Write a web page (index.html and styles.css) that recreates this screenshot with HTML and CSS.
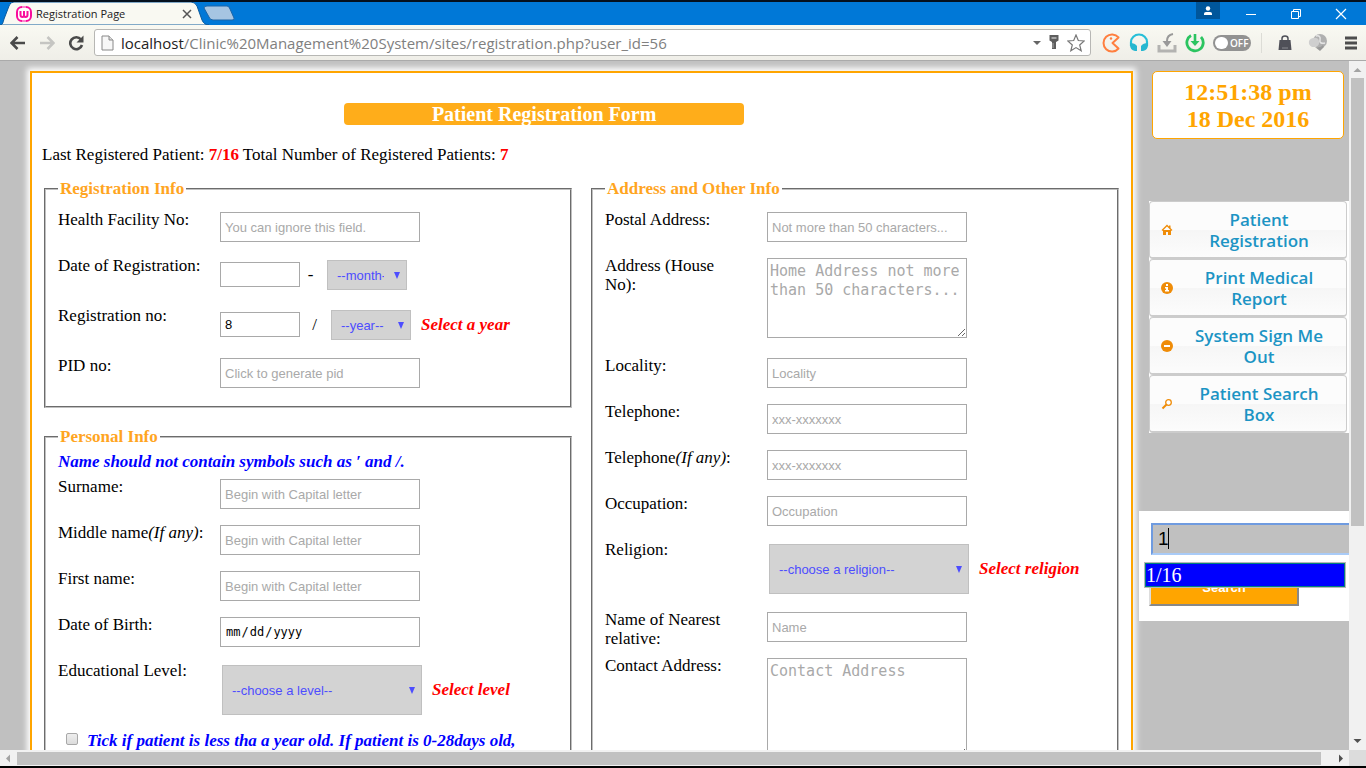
FILE: index.html
```html
<!DOCTYPE html>
<html lang="en">
<head>
<meta charset="utf-8">
<title>Registration Page</title>
<link rel="stylesheet" href="styles.css">
</head>
<body>
<div class="browser">
  <header class="tabbar">
    <svg class="tabshape" width="240" height="23" viewBox="0 0 240 23">
      <path d="M0 23 C3 23 3 20 4 17 L9 4 Q10 0 14 0 H191 Q195 0 197 4 L202 18 Q204 23 209 23 Z" fill="#f9f9f2" stroke="#0a5a9e" stroke-width="1"/>
      <path d="M207 4 H227 Q229 4 230 7 L234 16 Q235 18 232 18 H213 Q210 18 209 15 L204 6 Q204 4 207 4Z" fill="#a6c5e2" stroke="#1b65a8"/>
    </svg>
    <div class="tab">
      <svg width="16" height="16" viewBox="0 0 16 16"><rect x="1" y="1" width="14" height="14" rx="5" fill="#fff" stroke="#f90d9c" stroke-width="2"/><path d="M4.500 5 V9 Q4.500 11 6.500 11 Q8 11 8 9 V5 M8 9 Q8 11 9.500 11 Q11.500 11 11.500 9 V5" fill="none" stroke="#f90d9c" stroke-width="2"/><path d="M6 1 H10 M6 15 H10" stroke="#fff" stroke-width="1"/></svg>
      <span class="tabtitle">Registration Page</span>
      <button class="plain" aria-label="Close tab"><svg width="10" height="10" viewBox="0 0 10 10"><path d="M1 1 L9 9 M9 1 L1 9" stroke="#555" stroke-width="1.500"/></svg></button>
    </div>
    <div class="winbtns">
      <button class="user" aria-label="Profile"><svg width="10" height="10" viewBox="0 0 10 10"><circle cx="5" cy="2.500" r="2.200" fill="#fff"/><path d="M1 9 V7.500 Q1 6 3 6 H7 Q9 6 9 7.500 V9Z" fill="#fff"/></svg></button>
      <button class="plain" aria-label="Minimise"><svg width="12" height="12" viewBox="0 0 12 12"><path d="M1 6.500 H11" stroke="#fff"/></svg></button>
      <button class="plain" aria-label="Restore"><svg width="12" height="12" viewBox="0 0 12 12"><path d="M1.500 3.500 H8.500 V10.500 H1.500Z M3.500 3 V1.500 H10.500 V8.500 H9" fill="none" stroke="#fff"/></svg></button>
      <button class="plain" aria-label="Close"><svg width="12" height="12" viewBox="0 0 12 12"><path d="M1 1 L11 11 M11 1 L1 11" stroke="#fff" stroke-width="1.200"/></svg></button>
    </div>
  </header>
  <nav class="toolbar">
    <div class="navbtns">
      <button class="plain" aria-label="Back"><svg width="16" height="14" viewBox="0 0 16 14"><path d="M15 7 H2 M7.500 1 L1.500 7 L7.500 13" fill="none" stroke="#4a4a4a" stroke-width="2.600"/></svg></button>
      <button class="plain" aria-label="Forward"><svg width="16" height="14" viewBox="0 0 16 14"><path d="M1 7 H14 M8.500 1 L14.500 7 L8.500 13" fill="none" stroke="#c5c5c2" stroke-width="2.600"/></svg></button>
      <button class="plain" aria-label="Reload"><svg width="16" height="16" viewBox="0 0 16 16"><path d="M13 4.500 A6 6 0 1 0 14 10" fill="none" stroke="#4a4a4a" stroke-width="2.600"/><path d="M15.500 0.500 V7.500 H8.500Z" fill="#4a4a4a"/></svg></button>
    </div>
    <div class="omnibox">
      <svg width="13" height="16" viewBox="0 0 13 16"><path d="M1 1 H8 L12 5 V15 H1Z" fill="#f7f7f7" stroke="#888"/><path d="M8 1 V5 H12" fill="#ddd" stroke="#888"/></svg>
      <div class="url"><span>localhost</span>/Clinic%20Management%20System/sites/registration.php?user_id=56</div>
      <svg width="8" height="4" viewBox="0 0 8 4"><path d="M0 0 H8 L4 4Z" fill="#666"/></svg>
      <svg width="12" height="15" viewBox="0 0 12 15"><path d="M1.500 0 H10.500 V5.500 L8 7 V14 H4 V7 L1.500 5.500Z" fill="#5e5e5e"/><path d="M3.500 3 H8.500" stroke="#eee"/><path d="M5 8 V13" stroke="#aaa"/></svg>
      <svg width="18" height="18" viewBox="0 0 18 18"><path d="M9 1 L11.300 6.500 L17.200 7 L12.700 11 L14.200 16.800 L9 13.600 L3.800 16.800 L5.300 11 L0.800 7 L6.700 6.500Z" fill="#fff" stroke="#777" stroke-width="1.200"/></svg>
    </div>
    <div class="exts">
      <svg width="20" height="20" viewBox="0 0 20 20"><path d="M17.500 4.500 A8.500 8.500 0 1 0 17.500 15.500 L11.500 10Z" fill="none" stroke="#ff7f3f" stroke-width="2" stroke-linejoin="round"/><circle cx="10" cy="5.500" r="1.200" fill="#ff7f3f"/></svg>
      <svg width="20" height="20" viewBox="0 0 20 20"><path d="M2 13 V9 A8 7.500 0 0 1 18 9 V13" fill="none" stroke="#27bfd8" stroke-width="2.200"/><path d="M1 10 Q6 10 8 13 V18 H6 Q1 17 1 12Z M19 10 Q14 10 12 13 V18 H14 Q19 17 19 12Z" fill="#27b7d0"/></svg>
      <svg width="20" height="20" viewBox="0 0 20 20"><path d="M2 12 V18 H18 V12" fill="none" stroke="#b3b3b1" stroke-width="3"/><path d="M16 1 Q10 2 10 8" fill="none" stroke="#999" stroke-width="2"/><path d="M5.500 8 H14.500 L10 14Z" fill="#999"/></svg>
      <svg width="20" height="20" viewBox="0 0 20 20"><path d="M6 2.500 A8.200 8.200 0 1 0 16 4" fill="none" stroke="#2bc460" stroke-width="2.800"/><path d="M10 1 V9" stroke="#2bc460" stroke-width="2.600"/><path d="M5.500 8 H14.500 L10 13Z" fill="#2bc460"/></svg>
      <span class="off"><i></i>OFF</span>
      <span class="rule"></span>
      <svg class="bag" width="14" height="16" viewBox="0 0 14 16"><path d="M1.500 5 H12.500 L13.500 15 H0.500Z" fill="#4f5058"/><path d="M4 6 V3.500 Q4 1 7 1 Q10 1 10 3.500 V6" fill="none" stroke="#4f5058" stroke-width="1.500"/><path d="M4 13 H10" stroke="#8a8a90"/></svg>
      <svg width="20" height="18" viewBox="0 0 20 18"><circle cx="12" cy="7" r="7" fill="#b0b0b0"/><path d="M1 10 Q0 5 5 4 Q10 3 11 7 Q12 12 7 13 L4 13 Q2 12 1 10Z" fill="#cfcfcf"/><path d="M7 13 Q13 14 15 11 L16 13 L12 17Z" fill="#999"/><path d="M8 2 Q13 1 12 6 Q11 10 17 9" fill="none" stroke="#e4e4e4" stroke-width="1.500"/></svg>
      <button class="plain" aria-label="Menu"><svg width="14" height="14" viewBox="0 0 14 14"><path d="M1 2 H13 M1 7 H13 M1 12 H13" stroke="#4d4d4d" stroke-width="3"/></svg></button>
    </div>
  </nav>
  <div class="view">
    <div class="page">
      <main class="card">
        <h1 class="title">Patient Registration Form</h1>
        <p class="stats">Last Registered Patient: <b>7/16</b> Total Number of Registered Patients: <b>7</b></p>
        <form class="columns">
          <div class="column">
            <fieldset class="group">
              <legend>Registration Info</legend>
              <div class="row"><label for="hf">Health Facility No:</label><input class="field" id="hf" type="text" placeholder="You can ignore this field."></div>
              <div class="row pair"><label for="day">Date of Registration:</label><input class="field short" id="day" type="text"><span class="dash">-</span><select class="pick small" aria-label="Month"><option>--month--</option></select></div>
              <div class="row pair"><label for="reg">Registration no:</label><input class="field short" id="reg" type="text" value="8"><span class="slash">/</span><select class="pick small" aria-label="Year"><option>--year--</option></select><span class="error">Select a year</span></div>
              <div class="row"><label for="pid">PID no:</label><input class="field" id="pid" type="text" placeholder="Click to generate pid"></div>
            </fieldset>
            <fieldset class="group noted">
              <legend>Personal Info</legend>
              <p class="note">Name should not contain symbols such as ′ and /.</p>
              <div class="row"><label for="sn">Surname:</label><input class="field" id="sn" type="text" placeholder="Begin with Capital letter"></div>
              <div class="row"><label for="mn">Middle name<em>(If any)</em>:</label><input class="field" id="mn" type="text" placeholder="Begin with Capital letter"></div>
              <div class="row"><label for="fn">First name:</label><input class="field" id="fn" type="text" placeholder="Begin with Capital letter"></div>
              <div class="row"><label for="dob">Date of Birth:</label><input class="field date" id="dob" type="date"></div>
              <div class="row choice"><label for="edu">Educational Level:</label><select class="pick" id="edu"><option>--choose a level--</option></select><span class="error">Select level</span></div>
              <div class="tick"><input id="infant" type="checkbox"><label for="infant">Tick if patient is less tha a year old. If patient is 0-28days old,</label></div>
            </fieldset>
          </div>
          <div class="column">
            <fieldset class="group">
              <legend>Address and Other Info</legend>
              <div class="row"><label for="pa">Postal Address:</label><input class="field" id="pa" type="text" placeholder="Not more than 50 characters..."></div>
              <div class="row tall"><label for="ha">Address (House<br>No):</label><textarea class="area" id="ha" placeholder="Home Address not more than 50 characters..."></textarea></div>
              <div class="row"><label for="loc">Locality:</label><input class="field" id="loc" type="text" placeholder="Locality"></div>
              <div class="row"><label for="t1">Telephone:</label><input class="field" id="t1" type="text" placeholder="xxx-xxxxxxx"></div>
              <div class="row"><label for="t2">Telephone<em>(If any)</em>:</label><input class="field" id="t2" type="text" placeholder="xxx-xxxxxxx"></div>
              <div class="row"><label for="occ">Occupation:</label><input class="field" id="occ" type="text" placeholder="Occupation"></div>
              <div class="row choice"><label for="rel">Religion:</label><select class="pick" id="rel"><option>--choose a religion--</option></select><span class="error">Select religion</span></div>
              <div class="row"><label for="nn">Name of Nearest<br>relative:</label><input class="field" id="nn" type="text" placeholder="Name"></div>
              <div class="row tall"><label for="ca">Contact Address:</label><textarea class="area large" id="ca" placeholder="Contact Address"></textarea></div>
            </fieldset>
          </div>
        </form>
      </main>
      <aside class="side">
        <div class="clock">12:51:38 pm<br>18 Dec 2016</div>
        <nav class="menu">
          <a href="#"><svg width="12" height="12" viewBox="0 0 12 12"><path d="M1 6.500 L6 1.500 L11 6.500" fill="none" stroke="#ef8c08" stroke-width="1.300"/><path d="M2 6 H10 V11 H7 V8 H5 V11 H2Z M8 1.500 H9.500 V4 H8Z" fill="#ef8c08"/></svg><span>Patient Registration</span></a>
          <a href="#"><svg width="12" height="12" viewBox="0 0 12 12"><circle cx="6" cy="6" r="6" fill="#ef8c08"/><path d="M5 2 H7 V4 H5Z M4 5 H7 V8 H8 V9.500 H4 V8 H5 V6.500 H4Z" fill="#fff"/></svg><span>Print Medical Report</span></a>
          <a href="#"><svg width="12" height="12" viewBox="0 0 12 12"><circle cx="6" cy="6" r="6" fill="#ef8c08"/><path d="M3 5 H9 V7 H3Z" fill="#fff"/></svg><span>System Sign Me Out</span></a>
          <a href="#"><svg width="12" height="12" viewBox="0 0 12 12"><circle cx="7.500" cy="4.500" r="2.800" fill="#fff" stroke="#ef8c08" stroke-width="1.300"/><path d="M5.500 6.500 L1.500 10.500" stroke="#ef8c08" stroke-width="2"/></svg><span>Patient Search Box</span></a>
        </nav>
        <div class="search">
          <div class="query"><input type="text" aria-label="Patient search" value="1"><i class="caret"></i></div>
          <button class="go">Search</button>
          <div class="hint">1/16</div>
        </div>
      </aside>
    </div>
    <div class="vbar"><svg width="17" height="17" viewBox="0 0 17 17"><path d="M4.500 11 L8.500 7 L12.500 11Z" fill="#a3a3a3"/></svg><div class="vthumb"></div><svg width="17" height="17" viewBox="0 0 17 17"><path d="M4.500 6 L8.500 10 L12.500 6Z" fill="#505050"/></svg></div>
  </div>
  <div class="hbar"><svg width="17" height="16" viewBox="0 0 17 16"><path d="M10 4.500 L6 8.500 L10 12.500Z" fill="#a3a3a3"/></svg><div class="hthumb"></div><svg width="17" height="16" viewBox="0 0 17 16"><path d="M7 4.500 L11 8.500 L7 12.500Z" fill="#505050"/></svg><div class="corner"></div></div>
</div>
</body>
</html>
```
FILE: styles.css
```css
* { box-sizing: border-box; }
body { margin: 0; font-family: "Liberation Serif", serif; font-size: 17px; line-height: 19px; color: #000; }
button { font: inherit; }
svg { display: block; flex: none; }
.browser { display: flex; flex-direction: column; height: 100vh; overflow: hidden; border-top: 2px solid #04101e; border-bottom: 2px solid #000; }
.plain { background: none; border: 0; padding: 0; }

.tabbar { position: relative; height: 23px; background: #0078d7; display: flex; justify-content: space-between; }
.tabshape { position: absolute; left: 0; top: 0; }
.tab { position: relative; display: flex; align-items: center; gap: 4px; width: 192px; padding-left: 16px; font: 11px/16px "Open Sans", sans-serif; color: #222; }
.tabtitle { flex: 1; }
.winbtns { display: flex; align-items: center; gap: 33px; padding-right: 19px; }
.user { width: 24px; height: 17px; margin-right: -8px; align-self: flex-start; background: #00569b; border: 0; padding: 0 7px; }

.toolbar { display: flex; align-items: center; gap: 10px; height: 36px; padding: 0 8px 0 10px; background: linear-gradient(#f9f9f2, #efeee8); border-bottom: 1px solid #aaa; }
.navbtns { display: flex; align-items: center; gap: 13px; width: 74px; }
.omnibox { display: flex; flex: 1; align-items: center; gap: 7px; height: 27px; padding: 0 5px 0 6px; background: #fff; border: 1px solid #b7b7b4; border-radius: 3px; }
.url { flex: 1; font: 15px/22px "Open Sans", sans-serif; color: #808080; white-space: nowrap; }
.url span { color: #222; }
.exts { display: flex; align-items: center; gap: 8px; }
.off { display: flex; align-items: center; gap: 2px; width: 38px; height: 16px; padding: 2px; border-radius: 8px; background: #929292; color: #fff; font: 600 10px/12px "Open Sans", sans-serif; }
.off i { width: 13px; height: 12px; border-radius: 6px; background: #fff; }
.rule { width: 1px; height: 20px; margin: 0 8px 0 2px; background: #dcdcd6; }
.bag { margin-right: 8px; }
.exts button { margin-left: 8px; }

.view { display: flex; flex: 1; min-height: 0; }
.page { display: flex; flex: 1; min-width: 0; padding: 10px 0 0 30px; overflow: hidden; background: #c0c0c0; }
.card { flex: 1; height: max-content; margin-right: 6px; padding: 30px 10px; background: #fff; border: 2px solid #ffa500; box-shadow: 0 0 6px 3px #fff; }
.title { width: 400px; margin: 0 0 0 28%; background: #ffad1a; color: #fff; font-size: 20px; line-height: 22px; border-radius: 4px; text-align: center; }
.stats { margin: 20px 0 15px; }
.stats b { color: #f00; }
.columns { display: grid; grid-template-columns: 1fr 1fr; gap: 19px; padding: 0 2px; }
.column { display: flex; flex-direction: column; gap: 19px; min-width: 0; }
.group { min-width: 0; margin: 0; padding: 12px 12px 4px; border: 2px groove #c0c0c0; }
.noted { padding-top: 6px; }
.group legend { padding: 0 2px; color: #ffa51f; font-weight: bold; }
.note { margin: 0 0 6px; color: #00f; font-weight: bold; font-style: italic; }
.row { display: flex; align-items: flex-start; height: 46px; }
.row label { width: 162px; flex: none; white-space: nowrap; }
.pair { height: 50px; }
.tall { height: auto; padding-bottom: 18px; }
.choice { height: 70px; }
.field, .area { width: 200px; margin: 2px 0 0; border: 1px solid #a9a9a9; border-radius: 0; background: #fff; font-family: "Liberation Sans", sans-serif; font-size: 13px; }
.field { height: 30px; padding: 1px 4px; }
.short { width: 80px; height: 25px; margin-top: 6px; }
.field::placeholder, .area::placeholder { color: #a9a9a9; }
.date { font-family: "DejaVu Sans Mono", monospace; font-size: 12px; }
.date::-webkit-calendar-picker-indicator { display: none; }
.area { height: 80px; padding: 3px 2px; font: 15px/19px "DejaVu Sans Mono", monospace; }
.large { height: 100px; }
.pick { width: 200px; height: 50px; margin: 4px 0 0 2px; padding: 0 22px 0 9px; appearance: none; border: 1px solid #c0c0c0; border-radius: 0; color: #4d4dff; font: 13px "Liberation Sans", sans-serif; background: #d3d3d3 url("data:image/svg+xml,%3Csvg xmlns='http://www.w3.org/2000/svg' width='6' height='7'%3E%3Cpath d='M0 0H6L3 7Z' fill='%234d4dff'/%3E%3C/svg%3E") no-repeat right 6px center; }
.small { width: 80px; height: 30px; margin-left: 0; }
.dash, .slash { width: 27px; padding: 9px 6px 0 0; text-align: center; }
.slash { width: 31px; padding-right: 2px; }
.error { margin: 9px 0 0 10px; color: #f00; font-weight: bold; font-style: italic; white-space: nowrap; }
.choice .error { margin-top: 19px; }
.tick { display: flex; align-items: flex-start; gap: 9px; height: 90px; padding-left: 8px; color: #00f; font-weight: bold; font-style: italic; }
.tick input { appearance: none; margin: 2px 0 0; width: 12px; height: 12px; border: 1px solid #a8a8a8; border-radius: 2px; background: linear-gradient(#eee, #dcdcdc); }

.side { position: relative; width: 210px; flex: none; }
.clock { margin: 0 5px 62px 13px; height: 68px; padding: 7px 0; background: #fff; border: 1px solid #ffa500; border-radius: 5px; color: #ffa500; font-size: 24px; font-weight: bold; line-height: 27px; text-align: center; }
.menu { margin: 0 0 78px 10px; padding-right: 2px; background: #fff; }
.menu a { display: flex; align-items: center; height: 58px; padding: 0 17px 0 11px; gap: 16px; border: 1px solid #ccc; border-width: 1px 1px 2px; border-radius: 4px; background: linear-gradient(#fcfcfc 50%, #f6f6f6 51%, #fcfcfc); color: #1c94c4; text-decoration: none; font: 600 17px/21px "Open Sans", sans-serif; text-align: center; }
.menu span { flex: 1; }
.menu a:nth-child(3) { padding-right: 11px; gap: 10px; }
.search { position: relative; height: 110px; padding: 12px 0 0 10px; background: #fff; overflow: hidden; }
.query { position: relative; margin: 0 -10px 20px 2px; }
.query input { display: block; width: 100%; height: 32px; padding: 0 5px; background: #c0c0c0; border: 2px solid #6f9be0; border-bottom-color: #a9cbf7; outline: 0; font: 19px "Liberation Sans", sans-serif; }
.caret { position: absolute; left: 17px; top: 5px; width: 1px; height: 21px; background: #000; }
.go { display: block; width: 150px; height: 31px; padding: 0 0 6px; background: #ffa500; border: 2px solid; border-color: #ddd #888 #888 #ddd; color: #fff; font: bold 13px/17px "Liberation Sans", sans-serif; }
.hint { position: absolute; left: 5px; top: 51px; width: 202px; height: 26px; border: 1px solid #b8b8b8; outline: 1px solid #008080; outline-offset: -2px; padding: 1px 1px; background: #00f; color: #fff; font-size: 20px; line-height: 22px; }

.vbar { display: flex; flex-direction: column; width: 17px; background: #f1f1f1; }
.vthumb { flex: none; height: 65%; margin: 0 2px 0; background: #c1c1c1; }
.vbar svg:last-child { margin-top: auto; }
.hbar { display: flex; height: 16px; background: #f1f1f1; }
.hthumb { flex: 1; margin: 2px 11px 1px 0; background: #c1c1c1; }
.corner { width: 17px; background: #dcdcdc; }
```
